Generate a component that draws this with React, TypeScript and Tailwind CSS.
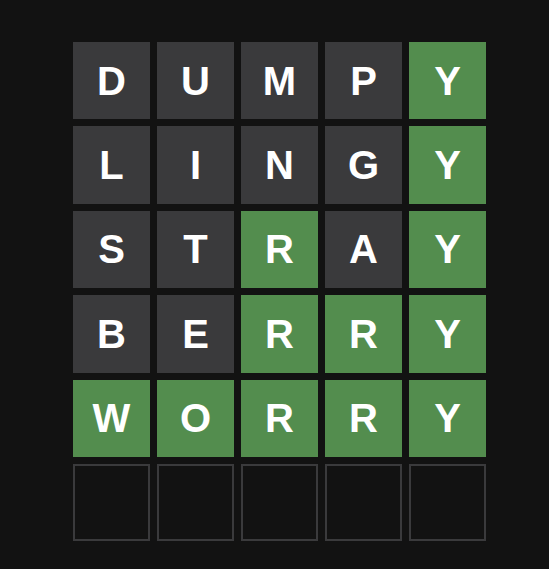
const rows: { letter: string; state: "gray" | "green" }[][] = [
  [..."DUMP"].map((l) => ({ letter: l, state: "gray" as const })).concat([{ letter: "Y", state: "green" }]),
  [..."LING"].map((l) => ({ letter: l, state: "gray" as const })).concat([{ letter: "Y", state: "green" }]),
  [
    { letter: "S", state: "gray" },
    { letter: "T", state: "gray" },
    { letter: "R", state: "green" },
    { letter: "A", state: "gray" },
    { letter: "Y", state: "green" },
  ],
  [
    { letter: "B", state: "gray" },
    { letter: "E", state: "gray" },
    { letter: "R", state: "green" },
    { letter: "R", state: "green" },
    { letter: "Y", state: "green" },
  ],
  [..."WORRY"].map((l) => ({ letter: l, state: "green" as const })),
];

const App = () => {
  return (
    <div className="w-[549px] h-[569px] bg-[#121212] flex justify-start pl-[73px] pt-[42px] font-['Liberation_Sans',Arial,sans-serif]">
      <div className="grid grid-cols-[repeat(5,77px)] auto-rows-[77.4px] gap-x-[7px] gap-y-[7px] h-fit">
        {rows.flat().map((tile, i) => (
          <div
            key={i}
            className={`flex items-center justify-center text-white font-bold text-[40px] leading-none ${
              tile.state === "green" ? "bg-[#538d4e]" : "bg-[#3a3a3c]"
            }`}
          >
            {tile.letter}
          </div>
        ))}
        {[0, 1, 2, 3, 4].map((i) => (
          <div key={`e${i}`} className="border-2 border-[#3a3a3c] bg-[#121212]" />
        ))}
      </div>
    </div>
  );
};

export default App;
